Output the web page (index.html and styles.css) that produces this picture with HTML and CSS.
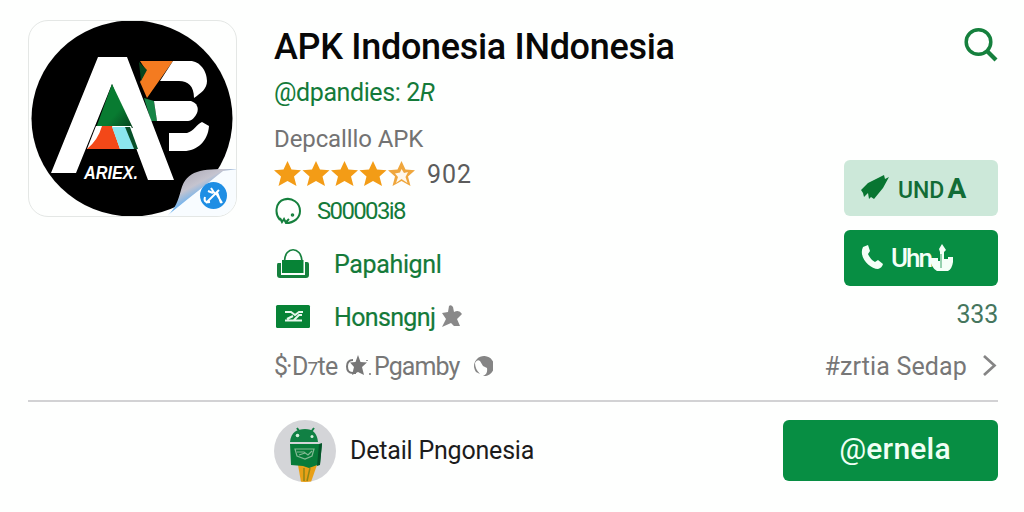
FILE: index.html
```html
<!DOCTYPE html>
<html lang="id">
<head>
<meta charset="utf-8">
<title>APK Indonesia</title>
<link rel="stylesheet" href="styles.css">
</head>
<body>
<main class="page">
  <section class="app">
    <div class="app-icon">
      <svg width="209" height="197" viewBox="28 20 209 197">
        <defs>
          <linearGradient id="curl" x1="0" y1="0" x2=".65" y2=".8"><stop offset="0" stop-color="#a09ca9"/><stop offset=".5" stop-color="#c5c4cf"/><stop offset=".7" stop-color="#78b5ec"/><stop offset="1" stop-color="#2f93ea"/></linearGradient>
          <linearGradient id="leaf" x1="0" y1="0" x2="1" y2="1"><stop offset="0" stop-color="#087b31"/><stop offset=".6" stop-color="#087b31"/><stop offset="1" stop-color="#05401c"/></linearGradient>
        </defs>
        <ellipse cx="132" cy="118.500" rx="100.500" ry="98" fill="#000"/>
        <path d="M140 61H173L147 98L140 82L146 70Z" fill="#f47b20"/>
        <path d="M139 62L147 70L141 81Z" fill="#06451d"/>
        <path d="M173 61H190C200 61 207 71 207 81C207 89 201 93 194 98C194 86 188 81 179 81H160Z" fill="#fff"/>
        <path d="M144 98L154 101L157 121H151Z" fill="#168445"/>
        <path d="M154 101H191C197 103 199 108 197 113C195 117 192 121 188 121H157Z" fill="#fff"/>
        <path d="M169 133H187C194 131 197 124 202 122L209 126C208 141 197 151 184 151H169Z" fill="#fff"/>
        <path d="M98 57H127L174 180H148L112 84L76 173H51Z" fill="#fff"/>
        <path d="M87 149H136L144 173H78Z" fill="#000"/>
        <path d="M112 84L133 128H96Z" fill="url(#leaf)"/>
        <path d="M96 126H131L140 149H87Z" fill="#fff"/>
        <path d="M102 126H112L120 149H87Q98 140 102 126Z" fill="#f34818"/>
        <path d="M112 127H126L134 149H120Z" fill="#8be6ee"/>
        <path d="M130 127L138 149H134L125 127Z" fill="#075029"/>
        <text x="84" y="179" class="logo-label" textLength="54" lengthAdjust="spacingAndGlyphs">ARIEX.</text>
        <path d="M168 215C184 199 207 184 220 171L237 169V217H168Z" fill="#f8fcff"/>
        <path d="M237 169C205 169 187 168 181 190C178 201 175 209 168 215C184 202 207 184 223 171Z" fill="url(#curl)"/>
        <circle cx="213.500" cy="195.500" r="13.500" fill="#1e8ee4"/>
        <path d="M206 203L217 192L221 203M208 191L213 193M211 188L215 194L219 190M205 197Q203 203 210 202M216 193L222 203" fill="none" stroke="#fff" stroke-width="2"/>
      </svg>
    </div>

    <div class="details">
      <h1 class="title">APK Indonesia INdonesia</h1>
      <p class="handle">@dpandies: 2<i>R</i></p>
      <p class="category">Depcalllo APK</p>
      <div class="rating">
        <svg width="141" height="28" viewBox="0 0 141 28">
          <defs><path id="star" d="M13.500 1L17.500 9.500L27 10.300L20 16.400L22.500 26L13.500 21L4.500 26L7 16.400L0 10.300L9.500 9.500Z"/></defs>
          <g fill="#f39c16"><use href="#star"/><use href="#star" x="28.500"/><use href="#star" x="57"/><use href="#star" x="85.500"/><use href="#star" x="114" fill="#efa63d"/></g>
          <path d="M121 13.500L126 12.500L127.500 9L130 13L134 12L131.500 17L133.500 23L127.500 19L122 23L124 17Z" fill="#fff8ec"/>
        </svg>
        <span class="score">902</span>
      </div>
      <div class="count">
        <svg width="43" height="28" viewBox="274 197 43 28" fill="none" stroke="#15803d" stroke-width="2">
          <path d="M280 220C274 213 276 202 284 199.500C292 197 300 203 300 211C300 218 294 223 286 223L284 219L282 222L280 218M286 222L289 219"/><circle cx="292.500" cy="215" r=".8"/>
        </svg>
        <span class="count-text">S00003i8</span>
      </div>
      <div class="feature">
        <svg width="60" height="32" viewBox="274 248 60 32">
          <path d="M280 263H278Q277 263 277 265V275Q277 278 280 278H306Q309 278 309 275V264Q309 262 307 262H305V275H281V263Z" fill="#15803d"/>
          <path d="M282 260H303.500V273H282Z" fill="#078336"/><path d="M284.500 261C285 246 301 246 302 261" fill="none" stroke="#15803d" stroke-width="1.700"/>
        </svg>
        <span class="feature-text first">Papahignl</span>
      </div>
      <div class="feature">
        <svg width="60" height="32" viewBox="274 301 60 32">
          <rect x="276" y="305" width="34" height="23" rx="1.500" fill="#078336"/>
          <path d="M285 312H291L295 315L299 312H303M285 320.500H302M287 319L293 316M294 320L299 315H302" fill="none" stroke="#e7f7ec" stroke-width="2"/>
        </svg>
        <span class="feature-text second">Honsngnj</span>
        <svg class="badge" width="22" height="24" viewBox="441 304 22 24"><path d="M449 305Q451 303 453 306L454 311Q459 308 462 313L457 318L460 325L454 325L451 322L442 326L446 318L442 312L448 311Z" fill="#898989"/></svg>
      </div>
    </div>

    <aside class="actions">
      <svg class="search" width="36" height="38" viewBox="962 26 36 38" fill="none" stroke="#15803d"><circle cx="978.500" cy="42" r="12.300" stroke-width="3.500"/><path d="M987 51L996 60" stroke-width="4.200"/></svg>
      <button class="button soft">
        <svg width="30" height="28" viewBox="860 175 30 28"><path d="M861 191L868 184L880 178L884 176L885 180L889 178L883 189L874 200L871 198L869 200L868 194L864 198L863 194Z" fill="#087531"/></svg>
        <span class="soft-text">UND<span class="tall">A</span></span>
      </button>
      <button class="button solid">
        <svg width="30" height="28" viewBox="860 245 30 28"><path d="M863 248L868 246L870 252L868 255Q870 260 875 263L878 261L883 265Q882 269 878 270C870 270 858 258 863 248Z" fill="#f4fff7"/></svg>
        <span class="solid-text">Uhn</span>
        <svg width="26" height="30" viewBox="929 241 26 30"><path d="M939 247L942 242L946 248L944 250V257H948V255H953V260Q952 267 948 269H937Q931 266 930 256H938V259H940V250Z" fill="#f4fff7"/><path d="M941 252V266" stroke="#078e43" stroke-width=".8"/></svg>
      </button>
      <span class="total">333</span>
    </aside>
  </section>

  <section class="meta">
    <div class="meta-left">
      <span class="price">$<span class="tick">·</span></span><span class="date">D<span class="turned">7</span>te</span>
      <svg width="29" height="28" viewBox="345 353 29 28"><path d="M353 361Q347 361 347 367.500T353 374H356" fill="none" stroke="#777" stroke-width="2"/><path d="M358 356L360.500 363L367 363.500L362 368L364 376L358 373L352 376L354 368L350 363.500L355.500 363Z" fill="#777"/><path d="M369 374h2v2h-2zM366 361h2v1h-2z" fill="#999"/></svg>
      <span class="by">Pgamby</span>
      <svg width="22" height="24" viewBox="470 355 22 24"><path d="M475 373A10 10 0 1 1 482 377Q487 375 486 369L482 367L479 362Q476 360 474 364Q474 370 479 375Z" fill="#858585"/></svg>
    </div>
    <div class="meta-right"><span class="tag">#zrtia Sedap</span>
      <svg width="16" height="24" viewBox="983 353 16 24"><path d="M985 355L995.500 364.500L985 374" fill="none" stroke="#858585" stroke-width="2.700"/></svg>
    </div>
  </section>

  <footer class="footer">
    <svg width="62" height="62" viewBox="274 421 62 62">
      <defs><clipPath id="avatar"><circle cx="305" cy="452" r="31"/></clipPath></defs>
      <g clip-path="url(#avatar)">
        <path d="M274 421h62v62h-62z" fill="#d4d5d8"/>
        <path d="M298 466H317L311 483H301Z" fill="#e9a017"/><path d="M304 469V482M310 469L307 482" stroke="#8f8616" stroke-width="1.500"/>
        <path d="M290 443C291 433 297 430 305 430S317 434 318 443Z" fill="#118044"/>
        <path d="M299 432L297 429M311 433L314 429" stroke="#118044" stroke-width="2"/>
        <circle cx="297.500" cy="436.500" r="1.800" fill="#d4efdc"/><circle cx="312" cy="437.500" r="1.500" fill="#d4efdc"/>
        <path d="M290 445H322L320 465L309 469L303 467L291 466Z" fill="#087b39"/>
        <path d="M319 445L322 444L320 466L317 467Z" fill="#055429"/>
        <path d="M295 450H314L312 457L305 460L297 457ZM297 453H304L308 456L312 452M299 456L305 454" fill="none" stroke="#83b994" stroke-width="1.200"/>
      </g>
    </svg>
    <span class="footer-text">Detail Pngonesia</span>
    <button class="button main-button"><span class="main-text"><span class="at">@</span>ernela</span></button>
  </footer>
</main>
</body>
</html>
```

FILE: styles.css
```css
* { box-sizing: border-box; }
body { margin: 0; background: #fefffe; font-family: Roboto, "Liberation Sans", sans-serif; }
svg { display: block; flex: none; }
h1, p { margin: 0; }
.page { width: 1024px; height: 512px; padding: 20px 26px 0 28px; overflow: hidden; white-space: nowrap; }
.app { display: grid; grid-template-columns: 209px 1fr 154px; column-gap: 37px; height: 322px; }
.app-icon { width: 209px; height: 197px; border: 1px solid #e4e7e5; border-radius: 20px; overflow: hidden; }
.app-icon svg { margin: -1px; }
.details { display: flex; flex-direction: column; }
.title { height: 52px; line-height: 55px; font-size: 36px; font-weight: 500; color: #080808; letter-spacing: -.31px; }
.handle { height: 40px; line-height: 41px; font-size: 25px; color: #147a39; letter-spacing: -.4px; }
.category { height: 45px; line-height: 54px; font-size: 24px; color: #737373; letter-spacing: -.1px; }
.rating { display: flex; align-items: center; height: 34px; gap: 12px; }
.score { font-size: 25px; color: #5c5c5c; letter-spacing: 1px; }
.count { display: flex; align-items: center; height: 40px; }
.count-text { font-size: 24px; color: #147a39; letter-spacing: -1.65px; }
.feature { display: flex; align-items: center; height: 52px; margin-top: 7px; }
.feature + .feature { margin-top: 1px; }
.feature-text { font-size: 25px; color: #147a39; -webkit-text-stroke: .2px #147a39; }
.first { letter-spacing: -.35px; }
.second { letter-spacing: -.65px; }
.badge { margin-left: 6px; }
.actions { display: flex; flex-direction: column; }
.search { align-self: flex-end; margin-top: 6px; }
.button { display: flex; align-items: center; border: 0; border-radius: 6px; padding: 0; font-family: inherit; }
.soft { height: 56px; margin-top: 96px; padding-left: 16px; gap: 8px; background: #cce8d9; }
.soft-text { color: #126c36; font-size: 23px; font-weight: 500; }
.tall { margin-left: 3px; font-size: 28px; font-weight: 700; }
.solid { height: 56px; margin-top: 14px; padding-left: 16px; background: #078e43; }
.solid-text { width: 38px; margin-left: 1px; color: #f4fff7; font-size: 26px; font-weight: 500; letter-spacing: -2px; }
.total { align-self: flex-end; margin-top: 13px; font-size: 25px; line-height: 32px; color: #45765d; letter-spacing: -.2px; }
.meta { display: flex; justify-content: space-between; align-items: center; height: 60px; padding-left: 246px; padding-bottom: 10px; border-bottom: 2px solid #d2d2d4; font-size: 25px; color: #777; }
.meta-left, .meta-right { display: flex; align-items: center; }
.price { width: 18px; display: flex; }
.tick { margin-left: -2px; }
.date { width: 53px; letter-spacing: -.8px; }
.turned { display: inline-block; font-size: 19px; }
.by { width: 97px; letter-spacing: -.9px; }
.meta-right { gap: 15px; }
.tag { letter-spacing: .15px; }
.footer { display: flex; align-items: center; height: 97px; padding-left: 246px; }
.footer-text { margin-left: 14px; font-size: 25px; color: #1c1c1c; letter-spacing: -.2px; }
.main-button { width: 215px; height: 61px; margin-left: auto; justify-content: center; background: #078e43; }
.main-text { padding: 0 0 4px 9px; font-size: 30px; font-weight: 500; color: #f0fff5; letter-spacing: .2px; }
.at { font-weight: 400; }
.logo-label { font: italic 700 19px "Liberation Sans", sans-serif; fill: #fff; }
```
